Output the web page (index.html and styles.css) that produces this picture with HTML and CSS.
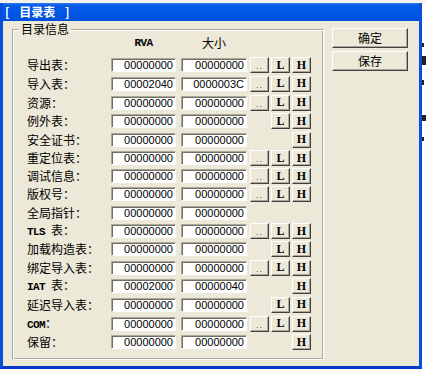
FILE: index.html
```html
<!DOCTYPE html>
<html lang="zh-CN">
<head>
    <meta charset="UTF-8">
    <title>目录表</title>
    <link rel="stylesheet" href="styles.css">
</head>
<body>
<div class="screen">
    <div class="behind-top"></div>
    <div class="desk">
        <div class="win">
            <div class="caption">[ 目录表 ]</div>
            <div class="client">
                <div class="group">
                    <span class="legend">目录信息</span>
                    <div class="head">
                        <span class="hcol asc">RVA</span>
                        <span class="hcol wide">大小</span>
                    </div>

                    <div class="row">
                        <span class="lbl">导出表：</span>
                        <span class="edit">00000000</span><span class="edit wide">00000000</span>
                        <span class="btns"><button class="sb dots">..</button><button class="sb">L</button><button class="sb">H</button></span>
                    </div>
                    <div class="row t">
                        <span class="lbl">导入表：</span>
                        <span class="edit">00002040</span><span class="edit wide">0000003C</span>
                        <span class="btns"><button class="sb dots">..</button><button class="sb">L</button><button class="sb">H</button></span>
                    </div>
                    <div class="row t">
                        <span class="lbl">资源：</span>
                        <span class="edit">00000000</span><span class="edit wide">00000000</span>
                        <span class="btns"><button class="sb dots">..</button><button class="sb">L</button><button class="sb">H</button></span>
                    </div>
                    <div class="row">
                        <span class="lbl">例外表：</span>
                        <span class="edit">00000000</span><span class="edit wide">00000000</span>
                        <span class="btns"><span class="slot"></span><button class="sb">L</button><button class="sb">H</button></span>
                    </div>
                    <div class="row t">
                        <span class="lbl">安全证书：</span>
                        <span class="edit">00000000</span><span class="edit wide">00000000</span>
                        <span class="btns"><span class="slot"></span><span class="slot"></span><button class="sb">H</button></span>
                    </div>
                    <div class="row">
                        <span class="lbl">重定位表：</span>
                        <span class="edit">00000000</span><span class="edit wide">00000000</span>
                        <span class="btns"><button class="sb dots">..</button><button class="sb">L</button><button class="sb">H</button></span>
                    </div>
                    <div class="row">
                        <span class="lbl">调试信息：</span>
                        <span class="edit">00000000</span><span class="edit wide">00000000</span>
                        <span class="btns"><button class="sb dots">..</button><button class="sb">L</button><button class="sb">H</button></span>
                    </div>
                    <div class="row">
                        <span class="lbl">版权号：</span>
                        <span class="edit">00000000</span><span class="edit wide">00000000</span>
                        <span class="btns"><button class="sb dots">..</button><button class="sb">L</button><button class="sb">H</button></span>
                    </div>
                    <div class="row t">
                        <span class="lbl">全局指针：</span>
                        <span class="edit">00000000</span><span class="edit wide">00000000</span>
                    </div>
                    <div class="row">
                        <span class="lbl"><span class="asc">TLS </span>表：</span>
                        <span class="edit">00000000</span><span class="edit wide">00000000</span>
                        <span class="btns"><button class="sb dots">..</button><button class="sb">L</button><button class="sb">H</button></span>
                    </div>
                    <div class="row">
                        <span class="lbl">加载构造表：</span>
                        <span class="edit">00000000</span><span class="edit wide">00000000</span>
                        <span class="btns"><span class="slot"></span><button class="sb">L</button><button class="sb">H</button></span>
                    </div>
                    <div class="row t">
                        <span class="lbl">绑定导入表：</span>
                        <span class="edit">00000000</span><span class="edit wide">00000000</span>
                        <span class="btns"><button class="sb dots">..</button><button class="sb">L</button><button class="sb">H</button></span>
                    </div>
                    <div class="row">
                        <span class="lbl"><span class="asc">IAT </span>表：</span>
                        <span class="edit">00002000</span><span class="edit wide">00000040</span>
                        <span class="btns"><span class="slot"></span><span class="slot"></span><button class="sb">H</button></span>
                    </div>
                    <div class="row t">
                        <span class="lbl">延迟导入表：</span>
                        <span class="edit">00000000</span><span class="edit wide">00000000</span>
                        <span class="btns"><span class="slot"></span><button class="sb">L</button><button class="sb">H</button></span>
                    </div>
                    <div class="row t">
                        <span class="lbl"><span class="asc">COM</span>：</span>
                        <span class="edit">00000000</span><span class="edit wide">00000000</span>
                        <span class="btns"><button class="sb dots">..</button><button class="sb">L</button><button class="sb">H</button></span>
                    </div>
                    <div class="row">
                        <span class="lbl">保留：</span>
                        <span class="edit">00000000</span><span class="edit wide">00000000</span>
                        <span class="btns"><span class="slot"></span><span class="slot"></span><button class="sb">H</button></span>
                    </div>
                </div>

                <div class="side">
                    <button class="big">确定</button>
                    <button class="big">保存</button>
                </div>
            </div>
        </div>
        <!-- sliver of the window behind: just bits of its glyphs show -->
        <div class="behind">
            <i class="mark m1"></i>
            <i class="mark m2"></i>
            <i class="mark m3"></i>
            <i class="mark m4"></i>
            <i class="mark m5"></i>
        </div>
    </div>
</div>
</body>
</html>
```

FILE: styles.css
```css
body {
    margin: 0;
    background: #fff;
    font-family: "Noto Sans CJK SC", sans-serif;
    font-size: 12px;
    color: #000;
}

.screen {
    width: 427px;
    height: 369px;
    overflow: hidden;
    background: #fff;
}

.behind-top {
    height: 3px;
    background: #f3f2ec;
}

.desk {
    display: flex;
    height: 366px;
}

.win {
    width: 422px;
    flex: none;
    box-sizing: border-box;
    border: 3px solid #0a4fdc;
    border-top: 0;
    border-bottom-color: #0836c6;
    display: flex;
    flex-direction: column;
    background: #ece9d8;
}

.caption {
    height: 18px;
    line-height: 18px;
    padding-left: 2px;
    background: linear-gradient(to bottom, #2f7ef2 0, #0a5ce8 2px, #0056e6 50%, #0050dc 100%);
    color: #fff;
    font-weight: bold;
    white-space: pre;
    word-spacing: 7px;
}

.client {
    flex: 1;
    display: flex;
    gap: 8px;
    padding: 8px 0 0 9px;
}

/* etched group box */
.group {
    position: relative;
    width: 312px;
    height: 331px;
    box-sizing: border-box;
    border: 1px solid;
    border-color: #aca899 #fff #fff #aca899;
    box-shadow: inset 1px 1px #fff, inset -1px -1px #aca899;
    padding: 6px 0 0 14px;
}

.legend {
    position: absolute;
    top: -8px;
    left: 6px;
    padding: 0 2px;
    line-height: 14px;
    background: #ece9d8;
}

.head {
    display: flex;
    height: 14px;
    line-height: 14px;
    margin: 0 0 6px 84px;
}

.hcol {
    width: 65px;
    text-align: center;
}

.hcol.wide {
    width: 66px;
    margin-left: 5px;
}

.asc {
    font-family: "Liberation Mono", monospace;
    font-size: 11px;
    font-weight: bold;
    letter-spacing: -0.6px;
}

.row {
    display: flex;
    align-items: center;
    height: 18px;
}

.row.t {
    height: 19px;
}

.lbl {
    width: 84px;
    white-space: nowrap;
    line-height: 14px;
}

.edit {
    width: 65px;
    height: 14px;
    box-sizing: border-box;
    border: 1px solid;
    border-color: #aca899 #fff #fff #aca899;
    box-shadow: inset 1px 1px #716f64;
    background: #fff;
    padding-right: 2px;
    text-align: right;
    font-family: "Liberation Sans", sans-serif;
    font-size: 11px;
    line-height: 12px;
}

.edit.wide {
    width: 66px;
    margin-left: 5px;
}

.btns {
    display: flex;
    gap: 2px;
    margin-left: 3px;
}

.slot {
    width: 19px;
}

.sb,
.big {
    margin: 0;
    padding: 0;
    box-sizing: border-box;
    background: #ece9d8;
    border: 1px solid;
    border-color: #fff #404040 #404040 #fff;
    box-shadow: inset -1px -1px #aca899;
    color: #000;
}

.sb {
    width: 19px;
    height: 16px;
    font-family: "Liberation Serif", serif;
    font-size: 12px;
    font-weight: bold;
    line-height: 13px;
}

.sb.dots {
    font-family: "Liberation Sans", sans-serif;
    font-weight: normal;
    font-size: 9px;
    letter-spacing: 1px;
    line-height: 16px;
    color: #555;
}

.side {
    display: flex;
    flex-direction: column;
    gap: 3px;
    margin-top: -1px;
}

.big {
    width: 76px;
    height: 20px;
    font-family: "Noto Sans CJK SC", sans-serif;
    font-size: 12px;
    line-height: 16px;
}

.behind {
    width: 5px;
    flex: none;
    overflow: hidden;
    background: #fff;
    display: flex;
    flex-direction: column;
}

.mark {
    display: block;
    width: 2px;
    background: #222;
}

.m1 { height: 4px; margin-top: 40px; }
.m2 { height: 9px; width: 4px; margin-top: 9px; }
.m3 { height: 5px; margin-top: 15px; }
.m4 { height: 6px; width: 4px; margin-top: 30px; }
.m5 { height: 4px; margin-top: 16px; }
```
